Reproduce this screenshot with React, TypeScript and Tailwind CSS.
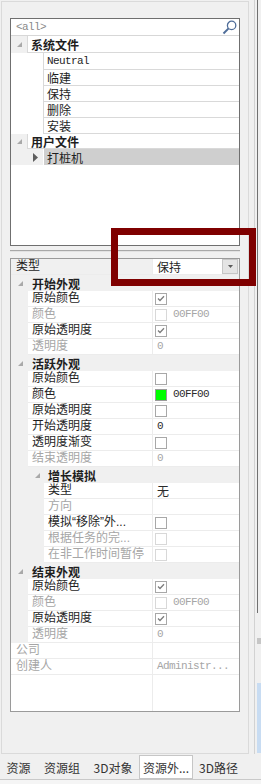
import React from 'react';

type Val =
  | { t: 'none' }
  | { t: 'text'; s: string }
  | { t: 'check'; on: boolean }
  | { t: 'color'; green?: boolean; s: string }
  | { t: 'select'; s: string };

type Row =
  | { kind: 'cat'; d: 0 | 1; label: string }
  | { kind: 'item'; d: 0 | 1 | 2; label: string; off?: boolean; shade?: boolean; v: Val };

const rows: Row[] = [
  { kind: 'item', d: 0, label: '类型', shade: true, v: { t: 'select', s: '保持' } },
  { kind: 'cat', d: 0, label: '开始外观' },
  { kind: 'item', d: 1, label: '原始颜色', v: { t: 'check', on: true } },
  { kind: 'item', d: 1, label: '颜色', off: true, v: { t: 'color', s: '00FF00' } },
  { kind: 'item', d: 1, label: '原始透明度', v: { t: 'check', on: true } },
  { kind: 'item', d: 1, label: '透明度', off: true, v: { t: 'text', s: '0' } },
  { kind: 'cat', d: 0, label: '活跃外观' },
  { kind: 'item', d: 1, label: '原始颜色', v: { t: 'check', on: false } },
  { kind: 'item', d: 1, label: '颜色', v: { t: 'color', green: true, s: '00FF00' } },
  { kind: 'item', d: 1, label: '原始透明度', v: { t: 'check', on: false } },
  { kind: 'item', d: 1, label: '开始透明度', v: { t: 'text', s: '0' } },
  { kind: 'item', d: 1, label: '透明度渐变', v: { t: 'check', on: false } },
  { kind: 'item', d: 1, label: '结束透明度', off: true, v: { t: 'text', s: '0' } },
  { kind: 'cat', d: 1, label: '增长模拟' },
  { kind: 'item', d: 2, label: '类型', v: { t: 'text', s: '无' } },
  { kind: 'item', d: 2, label: '方向', off: true, v: { t: 'none' } },
  { kind: 'item', d: 2, label: '模拟“移除”外...', v: { t: 'check', on: false } },
  { kind: 'item', d: 2, label: '根据任务的完...', off: true, v: { t: 'check', on: false } },
  { kind: 'item', d: 2, label: '在非工作时间暂停', off: true, v: { t: 'check', on: false } },
  { kind: 'cat', d: 0, label: '结束外观' },
  { kind: 'item', d: 1, label: '原始颜色', v: { t: 'check', on: true } },
  { kind: 'item', d: 1, label: '颜色', off: true, v: { t: 'color', s: '00FF00' } },
  { kind: 'item', d: 1, label: '原始透明度', v: { t: 'check', on: true } },
  { kind: 'item', d: 1, label: '透明度', off: true, v: { t: 'text', s: '0' } },
  { kind: 'item', d: 0, label: '公司', off: true, v: { t: 'none' } },
  { kind: 'item', d: 0, label: '创建人', off: true, v: { t: 'text', s: 'Administr...' } },
];

const mono = "font-['Liberation_Mono',monospace] text-[11px] tracking-[-0.6px]";
// latin punctuation (quotes, dots) narrow like the original, CJK from Noto
const label = "font-['Liberation_Sans','Noto_Sans_CJK_SC',sans-serif]";

const Tri = () => (
  <svg width="5" height="5" viewBox="0 0 5 5">
    <polygon points="5,0 5,5 0,5" fill="#a9a9a9" />
  </svg>
);

function Check({ on, off }: { on: boolean; off?: boolean }) {
  return (
    <span
      className={`ml-[2px] flex h-[12px] w-[12px] items-center justify-center border bg-white ${
        off ? 'border-[#d8d8d8]' : 'border-[#a8a8a8]'
      }`}
    >
      {on && (
        <svg width="8" height="7" viewBox="0 0 8 7">
          <path d="M1 3.5 L3 5.5 L7 1.2" stroke="#7c7c7c" strokeWidth="1.3" fill="none" />
        </svg>
      )}
    </span>
  );
}

function Value({ v, off }: { v: Val; off?: boolean }) {
  const color = off ? 'text-[#a6a6a6]' : 'text-[#2a2a2a]';
  if (v.t === 'check') return <Check on={v.on} off={off} />;
  if (v.t === 'text') {
    const isLatin = /^[0-9A-Za-z.]+$/.test(v.s);
    return <span className={`pl-[4px] ${color} ${isLatin ? mono : ''}`}>{v.s}</span>;
  }
  if (v.t === 'color')
    return (
      <span className="flex items-center">
        <span
          className={`ml-[2px] h-[12px] w-[12px] border ${
            v.green ? 'border-[#9a9a9a] bg-[#00ff00]' : 'border-[#d8d8d8] bg-white'
          }`}
        />
        <span className={`ml-[6px] ${color} ${mono}`}>{v.s}</span>
      </span>
    );
  if (v.t === 'select')
    return (
      <span className="flex h-full items-start">
        <span className="h-[15px] w-[69px] bg-white pl-[4px] leading-[15px] text-[#1e1e1e]">{v.s}</span>
        <span className="flex h-[15px] w-[16px] items-center justify-center border border-[#c6c6c6] bg-[#e4e4e4]">
          <svg width="5" height="3" viewBox="0 0 5 3">
            <polygon points="0,0 5,0 2.5,3" fill="#5a5a5a" />
          </svg>
        </span>
      </span>
    );
  return null;
}

function GridRow({ r }: { r: Row }) {
  if (r.kind === 'cat') {
    return (
      <div className="flex h-[16px] shrink-0 items-center bg-[#f0f0f0]">
        <span className={`flex ${r.d === 0 ? 'w-[21px] pl-[7px]' : 'w-[37px] pl-[24px]'}`}>
          <Tri />
        </span>
        <span className="font-bold text-[#1e1e1e]">{r.label}</span>
      </div>
    );
  }
  const gutter = r.d === 1 ? 'w-[17px]' : r.d === 2 ? 'w-[33px]' : '';
  return (
    <div className="flex h-[16px] shrink-0">
      {gutter && <div className={`${gutter} bg-[#f0f0f0]`} />}
      <div className={`flex flex-1 border-b border-[#ececec] ${r.shade ? 'bg-[#f0f0f0]' : 'bg-white'}`}>
        <div
          className={`flex flex-1 items-center border-r border-[#ececec] whitespace-nowrap ${label} ${
            r.d === 0 ? 'pl-[5px]' : 'pl-[4px]'
          } ${r.off ? 'text-[#a6a6a6]' : 'text-[#1e1e1e]'}`}
        >
          {r.label}
        </div>
        <div className="flex w-[86px] items-center">
          <Value v={r.v} off={r.off} />
        </div>
      </div>
    </div>
  );
}

function TreeHeader({ label, h }: { label: string; h: string }) {
  return (
    <div className={`flex ${h} shrink-0`}>
      <div className="flex w-[16px] items-center justify-center bg-[#f0f0f0]">
        <Tri />
      </div>
      <div className="flex flex-1 items-center border-b border-l border-[#d9d9d9] pl-[3px] font-bold text-[#1e1e1e]">
        {label}
      </div>
    </div>
  );
}

function TreeItem({ label, h, latin, sel }: { label: string; h: string; latin?: boolean; sel?: boolean }) {
  return (
    <div className={`flex ${h} shrink-0`}>
      <div className={`flex w-[32px] items-center justify-end pr-[5px] ${sel ? 'bg-[#f0f0f0]' : ''}`}>
        {sel && (
          <svg width="5" height="9" viewBox="0 0 5 9">
            <polygon points="0,0 5,4.5 0,9" fill="#5e5e5e" />
          </svg>
        )}
      </div>
      <div
        className={`flex flex-1 items-center border-l pl-[3px] text-[#1e1e1e] ${
          sel ? 'border-white bg-[#cfcfcf]' : 'border-b border-[#d9d9d9]'
        } ${latin ? mono : ''}`}
      >
        {label}
      </div>
    </div>
  );
}

const tabs = [
  { label: '资源', w: 'w-[37px]' },
  { label: '资源组', w: 'w-[50px]' },
  { label: '3D对象', w: 'w-[52px]' },
  { label: '资源外...', w: 'w-[54px]', active: true },
  { label: '3D路径', w: 'w-[51px]' },
];

export default function App() {
  return (
    <div className="relative flex h-[784px] w-[261px] flex-col overflow-hidden bg-[#f0f0f0] font-['Noto_Sans_CJK_SC',sans-serif] text-[12px] leading-[15px]">
      <div className="flex h-[754px] shrink-0">
        {/* panel */}
        <div className="ml-[1px] mt-[1px] flex h-[753px] w-[248px] flex-col border border-[#dadada]">
          {/* tree list */}
          <div className="mx-[8px] mt-[16px] flex h-[228px] shrink-0 flex-col border border-[#6f6f6f] bg-white">
            <div className="flex h-[17px] shrink-0 items-center justify-between border-b border-[#d7d7d7] pl-[5px] pr-[2px]">
              <span className={`text-[#8a8a8a] ${mono}`}>&lt;all&gt;</span>
              <svg width="15" height="15" viewBox="0 0 15 15">
                <circle cx="9.6" cy="5.4" r="4.2" stroke="#4f6d99" strokeWidth="1.3" fill="none" />
                <line x1="6.6" y1="8.4" x2="1.5" y2="13.5" stroke="#4f6d99" strokeWidth="2" />
              </svg>
            </div>
            <TreeHeader label="系统文件" h="h-[17px]" />
            <TreeItem label="Neutral" h="h-[17px]" latin />
            <TreeItem label="临建" h="h-[16px]" />
            <TreeItem label="保持" h="h-[16px]" />
            <TreeItem label="删除" h="h-[16px]" />
            <TreeItem label="安装" h="h-[16px]" />
            <TreeHeader label="用户文件" h="h-[15px]" />
            <TreeItem label="打桩机" h="h-[16px]" sel />
            <div className="flex-1" />
          </div>

          {/* splitter */}
          <div className="mx-[8px] mt-[4px] h-[2px] shrink-0 border-t border-[#a8a8a8] bg-[#e2e2e2]" />

          {/* property grid */}
          <div className="mx-[8px] mt-[6px] flex h-[454px] shrink-0 flex-col border border-[#9a9a9a] bg-white">
            {rows.map((r, i) => (
              <GridRow key={i} r={r} />
            ))}
            <div className="flex flex-1">
              <div className="w-[142px] border-r border-[#ececec]" />
              <div className="flex-1" />
            </div>
          </div>
        </div>

        {/* neighbouring panel edge */}
        <div className="flex h-full">
          <div className="w-[5px]" />
          <div className="w-[1px] bg-[#d2d2d2]" />
          <div className="w-[2px]" />
          <div className="flex w-[4px] flex-col">
            <div className="h-[613px] border-l border-[#707070]" />
            <div className="h-[25px]" />
            <div className="h-[6px] bg-[#c6c6c6]" />
            <div className="h-[39px]" />
            <div className="h-[70px] bg-[#c8dcf2]" />
          </div>
        </div>
      </div>

      {/* tabs */}
      <div className="flex h-[26px] shrink-0 border-b border-[#c9c9c9] pt-[1px]">
        {tabs.map((t) => (
          <div
            key={t.label}
            className={`flex h-[24px] ${t.w} items-center justify-center text-[#333] ${
              t.active ? 'border border-[#c6c6c6] bg-white' : ''
            }`}
          >
            {t.label}
          </div>
        ))}
      </div>
      <div className="flex-1 bg-[#f5f5f5]" />

      {/* annotation frame */}
      <div className="absolute left-[111px] top-[228px] h-[58px] w-[145px] border-[7px] border-[#7f0000]" />
    </div>
  );
}
